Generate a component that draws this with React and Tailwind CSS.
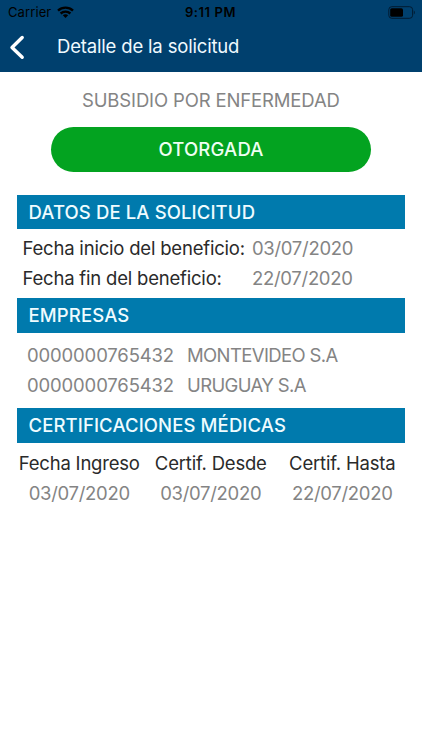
import React from "react";

function SectionTitle({ children, className }) {
  return (
    <h2 className={`ml-[17px] flex w-[388px] items-center bg-[#007aad] pl-[11.5px] pb-px text-[18.5px] font-medium tracking-[0.12px] whitespace-nowrap text-[#effcff] ${className}`}>
      {children}
    </h2>
  );
}

function StatusBar() {
  return (
    <div className="flex h-6 items-center text-black">
      <span className="ml-[8px] w-[49px] text-[13px] tracking-[0.1px]">Carrier</span>
      <svg className="h-[12px] w-[17px]" viewBox="0 0 17 12" fill="none" stroke="currentColor" strokeWidth="2.4">
        <path d="M1 4.6C5.2.6 11.8.6 16 4.6" />
        <path d="M3.6 7.5c2.8-2.5 7-2.5 9.8 0" />
        <path d="M8.5 11.9 5.8 9.3c1.5-1.4 3.9-1.4 5.4 0Z" fill="currentColor" stroke="none" />
      </svg>
      <span className="ml-[111px] w-[60px] text-[13px] font-semibold tracking-[0.55px] whitespace-nowrap">9:11 PM</span>
      <svg className="ml-[143px] h-[13px] w-[28px]" viewBox="0 0 28 13">
        <rect x=".8" y=".7" width="23.8" height="11.6" rx="3" fill="none" stroke="#001b31" />
        <rect x="2.2" y="2.2" width="12.8" height="8.6" rx="1.6" fill="#000" />
        <path d="M25.8 4.5c1.4.6 1.4 3.4 0 4Z" fill="#001b31" />
      </svg>
    </div>
  );
}

export default function App() {
  return (
    <main className="flex h-[750px] w-[422px] flex-col overflow-hidden bg-white font-['Inter',sans-serif] text-[18.5px] leading-[30px] text-[#848484]">
      <header className="h-[72px] bg-[#00406e]">
        <StatusBar />
        <div className="flex h-[46px] items-center text-[#effaff]">
          <svg className="ml-[9px] h-[26px] w-4" viewBox="0 0 16 26" fill="none" stroke="#fff" strokeWidth="3.4" strokeLinecap="round" strokeLinejoin="round">
            <path d="M13.2 3.5 3 13.5l10.2 9.8" />
          </svg>
          <h1 className="ml-[32px] pb-[2px] text-[18.5px] tracking-[-0.17px] whitespace-nowrap">Detalle de la solicitud</h1>
        </div>
      </header>
      <p className="mt-[13px] ml-[82px] tracking-[-0.14px] whitespace-nowrap">SUBSIDIO POR ENFERMEDAD</p>
      <div className="mt-[12px] ml-[51px] flex h-[45px] w-[320px] items-center justify-center rounded-full bg-[#03a320] pb-[2px] text-[18.5px] font-medium tracking-[0.2px] text-[#effff3]">
        OTORGADA
      </div>
      <SectionTitle className="mt-[23px] h-[34px]">DATOS DE LA SOLICITUD</SectionTitle>
      <dl className="mt-[4px] grid grid-cols-[229.5px_1fr] pl-[22.5px] tracking-[-0.2px] whitespace-nowrap">
        <dt className="text-[#2a2a2a]">Fecha inicio del beneficio:</dt>
        <dd className="tracking-[-0.3px]">03/07/2020</dd>
        <dt className="text-[#2a2a2a]">Fecha fin del beneficio:</dt>
        <dd className="tracking-[-0.3px]">22/07/2020</dd>
      </dl>
      <SectionTitle className="mt-[5px] h-[35px]">EMPRESAS</SectionTitle>
      <div className="mt-[7px] grid grid-cols-[160px_1fr] pl-[27px] whitespace-nowrap">
        <span className="tracking-[-0.15px]">0000000765432</span>
        <span className="tracking-[-0.62px]">MONTEVIDEO S.A</span>
        <span className="tracking-[-0.15px]">0000000765432</span>
        <span className="tracking-[-0.62px]">URUGUAY S.A</span>
      </div>
      <SectionTitle className="mt-[8px] h-[35px]">CERTIFICACIONES MÉDICAS</SectionTitle>
      <div className="mt-[5px] ml-[13.5px] grid grid-cols-[131.5px_131.5px_131.5px] text-center tracking-[-0.2px] whitespace-nowrap">
        <span className="text-[#2a2a2a]">Fecha Ingreso</span>
        <span className="text-[#2a2a2a]">Certif. Desde</span>
        <span className="text-[#2a2a2a]">Certif. Hasta</span>
        <span className="tracking-[-0.3px]">03/07/2020</span>
        <span className="tracking-[-0.3px]">03/07/2020</span>
        <span className="tracking-[-0.3px]">22/07/2020</span>
      </div>
    </main>
  );
}
